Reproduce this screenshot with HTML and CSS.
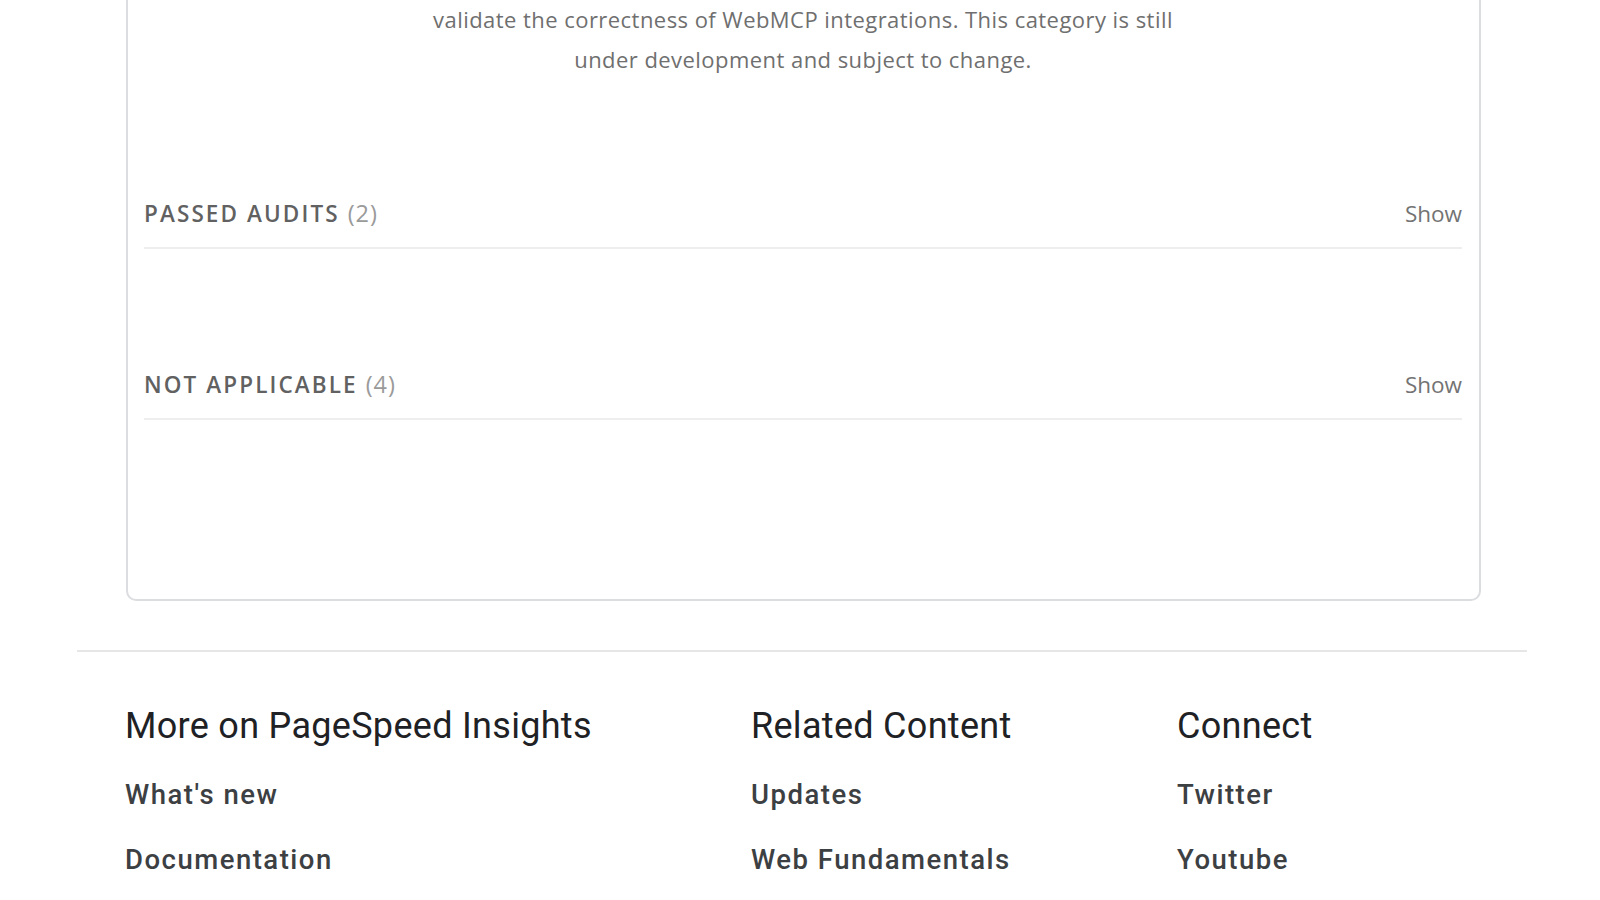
FILE: index.html
```html
<!DOCTYPE html>
<html lang="en">
<head>
<meta charset="utf-8">
<title>PageSpeed Insights</title>
<link rel="stylesheet" href="styles.css">
</head>
<body>
<div class="page">
  <section class="card">
    <p class="desc">validate the correctness of WebMCP integrations. This category is still<br>under development and subject to change.</p>
    <div class="group">
      <div class="group-head">
        <span class="group-title">Passed audits <span class="count">(2)</span></span>
        <span class="show">Show</span>
      </div>
    </div>
    <div class="group group-second">
      <div class="group-head">
        <span class="group-title">Not applicable <span class="count">(4)</span></span>
        <span class="show">Show</span>
      </div>
    </div>
  </section>

  <footer class="footer">
    <div class="col">
      <h3 class="col-title">More on PageSpeed Insights</h3>
      <a class="col-link" href="#">What's new</a>
      <a class="col-link" href="#">Documentation</a>
    </div>
    <div class="col">
      <h3 class="col-title">Related Content</h3>
      <a class="col-link" href="#">Updates</a>
      <a class="col-link" href="#">Web Fundamentals</a>
    </div>
    <div class="col">
      <h3 class="col-title">Connect</h3>
      <a class="col-link" href="#">Twitter</a>
      <a class="col-link" href="#">Youtube</a>
    </div>
  </footer>
</div>
</body>
</html>
```

FILE: styles.css
```css
* { box-sizing: border-box; }

html, body {
  margin: 0;
  padding: 0;
  background: #ffffff;
}

body {
  font-family: "Open Sans", "Noto Sans", sans-serif;
  overflow: hidden;
  height: 900px;
}

.page {
  width: 1450px;
  margin-left: 77px;
}

.card {
  margin: -12px 46px 0 49px;
  padding: 9px 17px 179px 16px;
  border: 2px solid #dcdde0;
  border-radius: 10px;
}

.desc {
  margin: 0;
  text-align: center;
  font-size: 22px;
  letter-spacing: 0.45px;
  line-height: 40px;
  color: #6f6f6f;
}

.group {
  margin-top: 118px;
}

.group-second {
  margin-top: 119px;
}

.group-head {
  display: flex;
  justify-content: space-between;
  align-items: baseline;
  padding-bottom: 17px;
  border-bottom: 2px solid #eeeeee;
  line-height: 33px;
}

.group-title {
  font-size: 22.5px;
  font-weight: 600;
  text-transform: uppercase;
  letter-spacing: 2.1px;
  color: #616161;
}

.count {
  font-size: 23.5px;
  font-weight: 400;
  color: #9a9a9a;
  letter-spacing: 1px;
}

.show {
  font-size: 22.5px;
  color: #737373;
}

.footer {
  margin-top: 49px;
  border-top: 2px solid #e6e6e6;
  padding: 52px 0 0 48px;
  display: grid;
  grid-template-columns: 626px 426px 1fr;
  font-family: Roboto, "Noto Sans", sans-serif;
}

.col {
  display: flex;
  flex-direction: column;
}

.col-title {
  margin: 0;
  font-size: 36px;
  font-weight: 400;
  line-height: 44px;
  letter-spacing: 0.3px;
  color: #202124;
}

.col-link {
  display: block;
  font-size: 27.5px;
  font-weight: 500;
  line-height: 32px;
  color: #3c4043;
  text-decoration: none;
  margin-top: 33px;
  letter-spacing: 1.5px;
}

.col-title + .col-link {
  margin-top: 31px;
}
```
